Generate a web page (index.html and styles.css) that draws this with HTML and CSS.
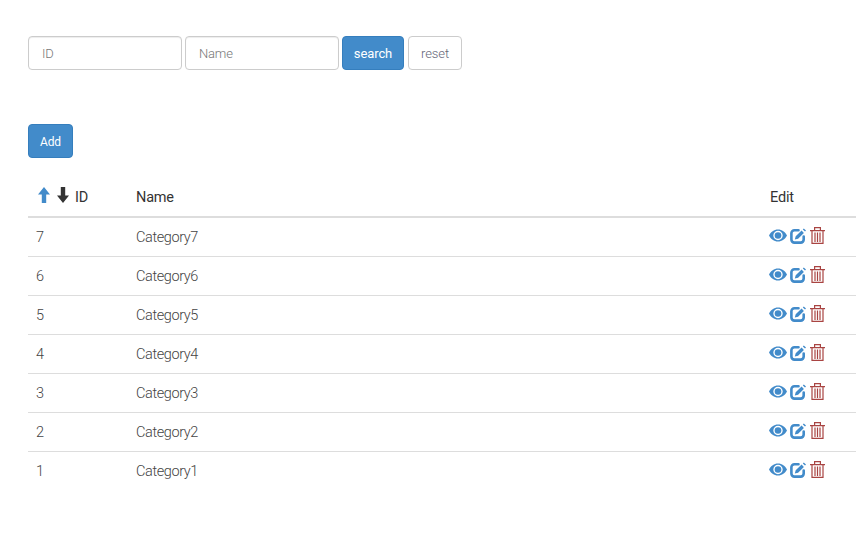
FILE: index.html
```html
<!DOCTYPE html>
<html lang="en">
<head>
<meta charset="utf-8">
<title>Categories</title>
<link rel="stylesheet" href="styles.css">
</head>
<body>
<svg class="defs" width="0" height="0" aria-hidden="true">
  <symbol id="eye" viewBox="0 0 18 13">
    <path fill-rule="evenodd" d="M9 .5C5 .5 1.800 3 0 6.500 1.800 10 5 12.500 9 12.500S16.200 10 18 6.500C16.200 3 13 .5 9 .5zM9 1.800a4.700 4.700 0 1 1 0 9.400 4.700 4.700 0 0 1 0-9.400z"/>
    <circle cx="9" cy="6.500" r="3.300"/>
  </symbol>
  <symbol id="edit" viewBox="0 0 16 16">
    <path fill="none" stroke="currentColor" stroke-width="2.600" stroke-linecap="round" d="M8.500 2.300H4.400A3 3 0 0 0 1.400 5.300v6.300a3 3 0 0 0 3 3h6.300a3 3 0 0 0 3-3V8.500"/>
    <path d="M11.600 2.600l2.300 2.300-5.800 5.800-3.300.9.900-3.300zM12.800 1.400l1-1 2.200 2.200-1 1z"/>
  </symbol>
  <symbol id="trash" viewBox="0 0 15 17">
    <path fill="none" stroke="currentColor" stroke-width="1.200" d="M0 3.600h15M4.600 3.500V.6h5.800v2.900M2 3.600V16.400h11V3.600"/>
    <path fill="none" stroke="currentColor" stroke-width="1.200" d="M5 5.500v9.500M7.500 5.500v9.500M10 5.500v9.500"/>
  </symbol>
  <symbol id="arrow-up" viewBox="0 0 12 16">
    <path d="M6 0l6 7.500H8.200V16H3.800V7.500H0z"/>
  </symbol>
  <symbol id="arrow-down" viewBox="0 0 12 16">
    <path d="M6 16L0 8.500h3.800V0h4.400v8.500H12z"/>
  </symbol>
</svg>
<main class="page">
  <form class="search">
    <input class="field" type="text" placeholder="ID">
    <input class="field" type="text" placeholder="Name">
    <button class="btn primary search-btn" type="button">search</button>
    <button class="btn plain" type="button">reset</button>
  </form>
  <button class="btn primary add" type="button">Add</button>
  <table class="grid">
    <thead>
      <tr>
        <th class="col-id"><span class="sort"><svg class="arrow up"><use href="#arrow-up"/></svg><svg class="arrow down"><use href="#arrow-down"/></svg>ID</span></th>
        <th class="col-name">Name</th>
        <th class="col-edit">Edit</th>
      </tr>
    </thead>
    <tbody>
      <tr><td>7</td><td>Category7</td><td><span class="icons"><svg class="eye"><use href="#eye"/></svg><svg class="edit"><use href="#edit"/></svg><svg class="trash"><use href="#trash"/></svg></span></td></tr>
      <tr><td>6</td><td>Category6</td><td><span class="icons"><svg class="eye"><use href="#eye"/></svg><svg class="edit"><use href="#edit"/></svg><svg class="trash"><use href="#trash"/></svg></span></td></tr>
      <tr><td>5</td><td>Category5</td><td><span class="icons"><svg class="eye"><use href="#eye"/></svg><svg class="edit"><use href="#edit"/></svg><svg class="trash"><use href="#trash"/></svg></span></td></tr>
      <tr><td>4</td><td>Category4</td><td><span class="icons"><svg class="eye"><use href="#eye"/></svg><svg class="edit"><use href="#edit"/></svg><svg class="trash"><use href="#trash"/></svg></span></td></tr>
      <tr><td>3</td><td>Category3</td><td><span class="icons"><svg class="eye"><use href="#eye"/></svg><svg class="edit"><use href="#edit"/></svg><svg class="trash"><use href="#trash"/></svg></span></td></tr>
      <tr><td>2</td><td>Category2</td><td><span class="icons"><svg class="eye"><use href="#eye"/></svg><svg class="edit"><use href="#edit"/></svg><svg class="trash"><use href="#trash"/></svg></span></td></tr>
      <tr><td>1</td><td>Category1</td><td><span class="icons"><svg class="eye"><use href="#eye"/></svg><svg class="edit"><use href="#edit"/></svg><svg class="trash"><use href="#trash"/></svg></span></td></tr>
    </tbody>
  </table>
</main>
</body>
</html>
```
FILE: styles.css
```css
* { box-sizing: border-box; }
html, body { margin: 0; height: 100%; overflow: hidden; background: #fff; }
body { font-family: Roboto, "Liberation Sans", sans-serif; font-size: 14px; color: #555; }
.defs { position: absolute; }
.page { padding: 36px 0 0 28px; }
.search { display: flex; height: 34px; }
.field { width: 154px; height: 34px; margin-right: 3px; padding: 6px 13px; border: 1px solid #ccc; border-radius: 4px; font: inherit; font-size: 13px; font-weight: 300; letter-spacing: -.2px; color: #555; box-shadow: inset 0 1px 1px rgba(0,0,0,.075); }
.field::placeholder { color: #777; opacity: 1; }
.btn { height: 34px; padding: 0; border: 1px solid #ccc; border-radius: 4px; font: inherit; font-size: 13px; letter-spacing: -.1px; }
.primary { background: #428bca; border-color: #357ebd; color: #fff; }
.plain { background: #fff; color: #667; width: 54px; font-weight: 300; }
.search-btn { width: 62px; margin-right: 4px; }
.add { display: block; width: 45px; margin-top: 54px; padding-top: 2px; font-size: 12px; }
.grid { width: 828px; margin-top: 20px; border-collapse: collapse; table-layout: fixed; }
.col-id { width: 108px; }
.col-name { width: 634px; }
.grid th { height: 39px; padding: 0; border-bottom: 2px solid #ddd; text-align: left; font-weight: 400; font-size: 14.500px; letter-spacing: -.2px; color: #333; vertical-align: middle; }
.grid td { height: 39px; padding: 2px 0 0; border-top: 1px solid #ddd; font-size: 14.500px; font-weight: 300; letter-spacing: -.4px; color: #444; vertical-align: middle; }
.grid tbody tr:first-child td { border-top: 0; }
.grid th:first-child { padding-left: 10px; }
.grid td:first-child { padding-left: 8px; }
.sort { display: flex; align-items: center; }
.arrow { width: 12px; height: 16px; margin-bottom: 5px; flex: none; }
.up { fill: #428bca; margin-right: 7px; }
.down { fill: #333; margin-right: 6px; }
.icons { display: flex; align-items: center; height: 18px; margin: -4px 0 0 -1px; }
.eye { width: 18px; height: 13px; fill: #428bca; margin-right: 3px; }
.edit { width: 16px; height: 16px; fill: #428bca; color: #428bca; margin-right: 4px; }
.trash { width: 15px; height: 17px; color: #a94442; }
```
